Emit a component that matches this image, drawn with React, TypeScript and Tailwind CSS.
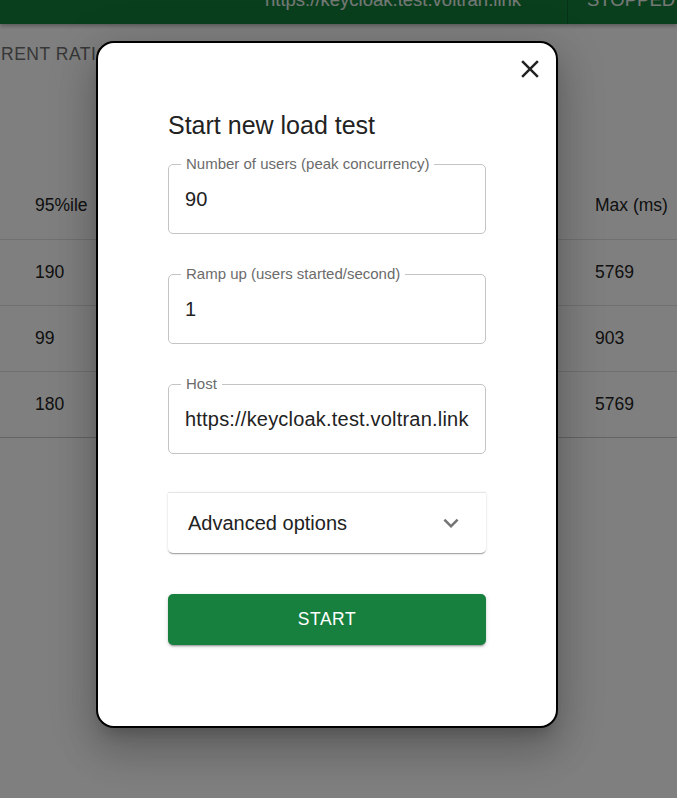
import React from "react";

const font = { fontFamily: '"Liberation Sans", Arial, sans-serif' };

function Field({ label, value }: { label: string; value: string }) {
  return (
    <div className="relative h-[70px] rounded-[5px] border border-[#c4c4c4] flex items-center pl-[16px]">
      <span className="absolute -top-[10px] left-[12px] bg-white px-[5px] text-[15px] leading-[18px] text-[#6b6b6b]">
        {label}
      </span>
      <span className="text-[20px] leading-[28px] text-[#222] tracking-[0.01em]">{value}</span>
    </div>
  );
}

export default function App() {
  const rows = [
    ["190", "5769"],
    ["99", "903"],
    ["180", "5769"],
  ];
  return (
    <div className="relative h-[798px] w-[677px] overflow-hidden bg-white" style={font}>
      {/* header */}
      <div className="h-[24px] bg-[#157e3c] flex items-start overflow-hidden text-white/90 text-[18.5px] leading-[20px] shadow-[0_2px_4px_rgba(0,0,0,0.3)]">
        <div className="ml-[265px] -mt-[10px] whitespace-nowrap">https://keycloak.test.voltran.link</div>
        <div className="ml-[46px] h-[24px] w-px bg-black/20" />
        <div className="ml-[19px] -mt-[10px] whitespace-nowrap">STOPPED</div>
      </div>
      {/* tabs */}
      <div className="h-[60px] flex items-center pl-[1px] text-[17.5px] text-[#6f6f6f] tracking-[0.03em] whitespace-nowrap">
        RENT RATIO
      </div>
      {/* table */}
      <div className="mt-[88px] text-[17.5px] text-[#222]">
        <div className="h-[68px] flex items-center border-b border-[#e0e0e0]">
          <div className="pl-[35px] w-[560px]">95%ile</div>
          <div className="pl-[35px]">Max (ms)</div>
        </div>
        {rows.map((r, i) => (
          <div
            key={i}
            className={`h-[66px] flex items-center border-b ${i === 2 ? "border-[#c8c8c8]" : "border-[#e0e0e0]"}`}
          >
            <div className="pl-[35px] w-[560px]">{r[0]}</div>
            <div className="pl-[35px]">{r[1]}</div>
          </div>
        ))}
      </div>

      {/* overlay */}
      <div className="absolute inset-0 bg-black/50">
        <div className="absolute left-[96px] top-[41px] w-[462px] h-[687px] rounded-[18px] border-2 border-black bg-white shadow-[0_11px_15px_-7px_rgba(0,0,0,0.2),0_24px_38px_3px_rgba(0,0,0,0.14),0_9px_46px_8px_rgba(0,0,0,0.12)]">
          <button className="absolute right-[11px] top-[11px] h-[30px] w-[30px] flex items-center justify-center text-[#222]">
            <svg viewBox="0 0 24 24" width="30" height="30" fill="currentColor">
              <path d="M19 6.41 17.59 5 12 10.59 6.41 5 5 6.41 10.59 12 5 17.59 6.41 19 12 13.41 17.59 19 19 17.59 13.41 12z" />
            </svg>
          </button>
          <div className="flex flex-col pl-[70px] pr-[70px] pt-[67px]">
            <div className="text-[25px] leading-[30px] text-[#222]">Start new load test</div>
            <div className="mt-[24px] flex flex-col gap-[40px]">
              <Field label="Number of users (peak concurrency)" value="90" />
              <Field label="Ramp up (users started/second)" value="1" />
              <Field label="Host" value="https://keycloak.test.voltran.link" />
            </div>
            <div className="mt-[38px] h-[61px] rounded-b-[5px] border-t border-[#e6e6e6] bg-white flex items-center justify-between pl-[20px] pr-[20px] shadow-[0_2px_1px_-1px_rgba(0,0,0,0.2),0_1px_1px_0_rgba(0,0,0,0.14),0_1px_3px_0_rgba(0,0,0,0.12)]">
              <span className="text-[20px] text-[#222]">Advanced options</span>
              <svg viewBox="0 0 24 24" width="30" height="30" fill="#757575">
                <path d="M16.59 8.59 12 13.17 7.41 8.59 6 10l6 6 6-6z" />
              </svg>
            </div>
            <button className="mt-[41px] h-[51px] rounded-[5px] bg-[#18803f] text-white text-[17.5px] font-medium tracking-[0.03em] shadow-[0_3px_1px_-2px_rgba(0,0,0,0.2),0_2px_2px_0_rgba(0,0,0,0.14),0_1px_5px_0_rgba(0,0,0,0.12)]">
              START
            </button>
          </div>
        </div>
      </div>
    </div>
  );
}
